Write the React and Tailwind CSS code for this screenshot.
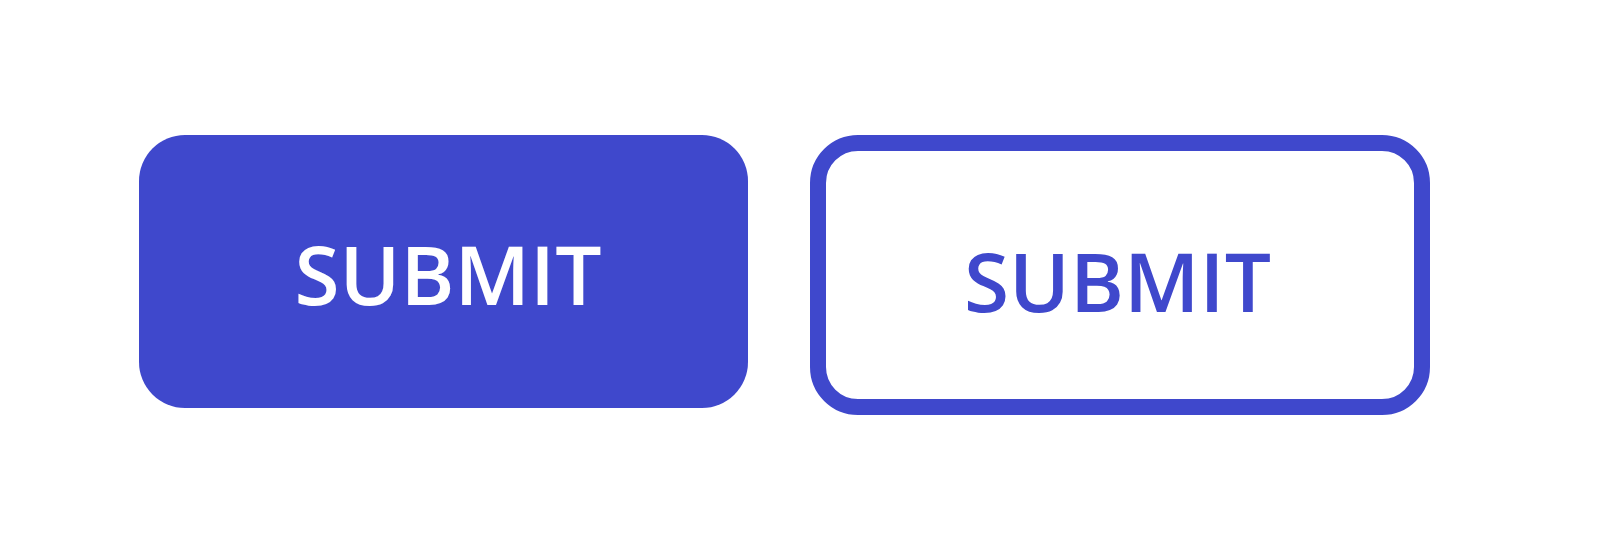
import React from "react";

const label = "SUBMIT";

export default function App() {
  return (
    <div className="w-[1600px] h-[552px] bg-white flex items-start gap-[62px] pl-[139px] pt-[135px] font-['Open_Sans',sans-serif]">
      {/* Solid button */}
      <button className="w-[609px] h-[273px] rounded-[46px] bg-[#3f48cc] text-white text-[82px] font-semibold leading-none flex items-center justify-center pl-[9px] pt-[3px]">
        {label}
      </button>

      {/* Outlined button */}
      <button className="w-[620px] h-[280px] rounded-[48px] border-[16px] border-[#3f48cc] bg-white text-[#3f48cc] text-[82px] font-semibold leading-none flex items-center justify-center pr-[5px] pt-[9px]">
        {label}
      </button>
    </div>
  );
}
